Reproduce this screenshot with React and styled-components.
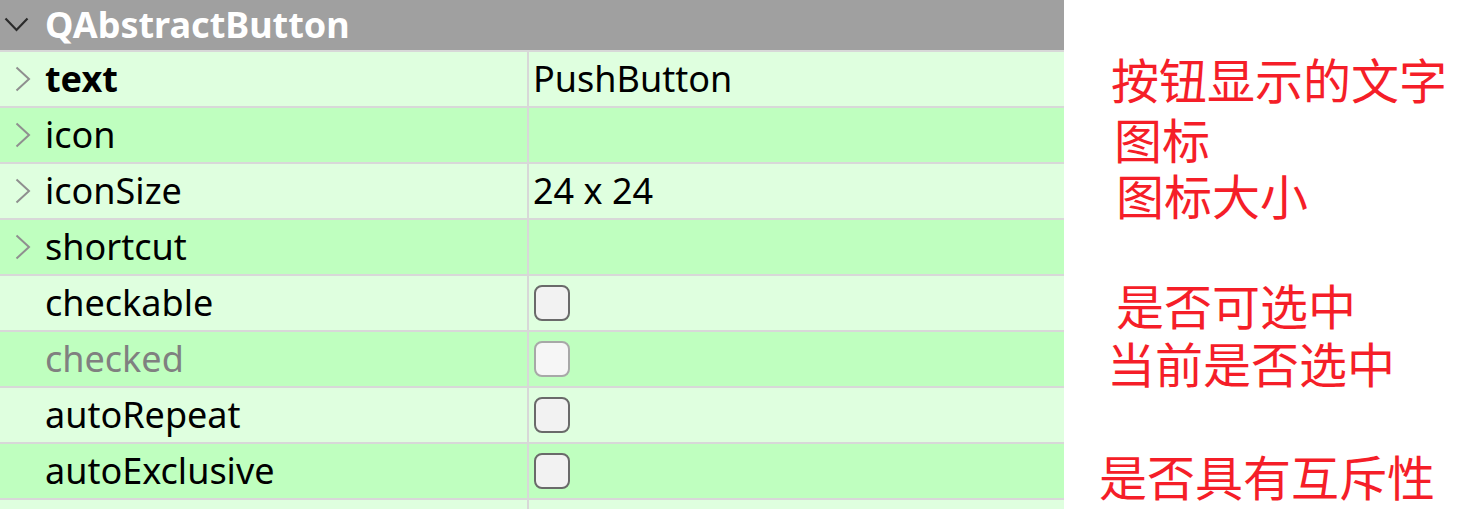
import React from "react";
import styled, { createGlobalStyle } from "styled-components";

const GlobalStyle = createGlobalStyle`
  html, body {
    margin: 0;
    padding: 0;
    background: #ffffff;
  }
  body {
    font-family: "Noto Sans", "Open Sans", sans-serif;
  }
`;

const Page = styled.div`
  display: flex;
  align-items: flex-start;
  width: 1477px;
  height: 509px;
  overflow: hidden;
  background: #ffffff;
`;

const Table = styled.div`
  width: 1064px;
  flex: none;
  display: flex;
  flex-direction: column;
`;

const GroupHeader = styled.div`
  flex: none;
  height: 50px;
  border-bottom: 2px solid #d8d8d8;
  background: #a0a0a0;
  display: flex;
  align-items: center;
  color: #ffffff;
  font-size: 36px;
  font-weight: 700;
  line-height: 1;
`;

const ToggleCell = styled.div`
  width: 45px;
  flex: none;
  display: flex;
  align-items: center;
  justify-content: ${(p) => (p.$down ? "flex-start" : "center")};
  padding-left: ${(p) => (p.$down ? "4px" : "0")};
  box-sizing: border-box;
`;

const Row = styled.div`
  flex: none;
  height: 54px;
  border-bottom: 2px solid #d8d8d8;
  background: ${(p) => (p.$alt ? "#bfffbf" : "#dfffdf")};
  display: grid;
  grid-template-columns: 529px 1fr;
  font-size: 36px;
  line-height: 1;
  color: #000000;
`;

const NameCell = styled.div`
  display: flex;
  align-items: center;
  border-right: 2px solid #d8d8d8;
  font-weight: ${(p) => (p.$bold ? 700 : 400)};
  color: ${(p) => (p.$disabled ? "#808080" : "#000000")};
`;

const ValueCell = styled.div`
  display: flex;
  align-items: center;
  padding-left: 4px;
`;

const CheckBox = styled.div`
  width: 36px;
  height: 36px;
  box-sizing: border-box;
  border-radius: 8px;
  margin-left: 1px;
  border: 2px solid ${(p) => (p.$disabled ? "#a8a8a8" : "#6a6a6a")};
  background: ${(p) => (p.$disabled ? "#f6f6f6" : "#f2f2f2")};
`;

const Notes = styled.div`
  flex: 1;
  display: flex;
  flex-direction: column;
  padding-top: 52px;
`;

const Note = styled.div`
  flex: none;
  height: 56px;
  display: flex;
  align-items: center;
  padding-left: ${(p) => p.$indent}px;
  margin-top: ${(p) => p.$shift || 0}px;
  margin-bottom: ${(p) => -(p.$shift || 0)}px;
  color: #f51e28;
  font-family: "Noto Sans CJK SC", "Noto Sans", sans-serif;
  font-size: 48px;
  line-height: 1;
  white-space: nowrap;
`;

const ChevronRight = () => (
  <svg width="16" height="26" viewBox="0 0 16 26">
    <polyline points="1.5,1.5 14,13 1.5,24.5" fill="none" stroke="#8f8f8f" strokeWidth="2" />
  </svg>
);

const ChevronDown = () => (
  <svg width="26" height="16" viewBox="0 0 26 16">
    <polyline points="1.5,1.5 12.5,13 23.5,1.5" fill="none" stroke="#2b2b2b" strokeWidth="2.2" />
  </svg>
);

const props = [
  { name: "text", bold: true, expand: true, value: "PushButton" },
  { name: "icon", expand: true, value: "" },
  { name: "iconSize", expand: true, value: "24 x 24" },
  { name: "shortcut", expand: true, value: "" },
  { name: "checkable", check: true },
  { name: "checked", check: true, disabled: true },
  { name: "autoRepeat", check: true },
  { name: "autoExclusive", check: true },
  { name: "", value: "" },
];

const notes = [
  { text: "按钮显示的文字", indent: 47, shift: -2 },
  { text: "图标", indent: 50, shift: 2 },
  { text: "图标大小", indent: 52, shift: 2 },
  { text: "", indent: 0 },
  { text: "是否可选中", indent: 52, shift: 0 },
  { text: "当前是否选中", indent: 43, shift: 2 },
  { text: "", indent: 0 },
  { text: "是否具有互斥性", indent: 35, shift: 3 },
];

export default function App() {
  return (
    <>
      <GlobalStyle />
      <Page>
        <Table>
          <GroupHeader>
            <ToggleCell $down>
              <ChevronDown />
            </ToggleCell>
            QAbstractButton
          </GroupHeader>
          {props.map((p, i) => (
            <Row key={i} $alt={i % 2 === 1}>
              <NameCell $bold={p.bold} $disabled={p.disabled}>
                <ToggleCell>{p.expand && <ChevronRight />}</ToggleCell>
                {p.name}
              </NameCell>
              <ValueCell>
                {p.check ? <CheckBox $disabled={p.disabled} /> : p.value}
              </ValueCell>
            </Row>
          ))}
        </Table>
        <Notes>
          {notes.map((n, i) => (
            <Note key={i} $indent={n.indent} $shift={n.shift}>
              {n.text}
            </Note>
          ))}
        </Notes>
      </Page>
    </>
  );
}
